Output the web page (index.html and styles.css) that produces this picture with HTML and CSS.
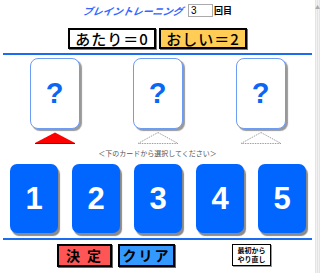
FILE: index.html
```html
<!DOCTYPE html>
<html lang="ja">
<head>
    <meta charset="UTF-8">
    <title>ブレイントレーニング</title>
    <link rel="stylesheet" href="styles.css">
</head>
<body>
    <div class="page">
        <main class="main">
            <div class="title-row">
                <span class="title">ブレイントレーニング</span>
                <input class="round" type="text" value="3">
                <span class="round-label">回目</span>
            </div>

            <div class="scores">
                <div class="score hit">あたり＝0</div>
                <div class="score near">おしい＝2</div>
            </div>

            <hr class="rule">

            <div class="slots">
                <div class="slot">
                    <div class="card-back">?</div>
                    <svg class="marker" width="42" height="12" viewBox="0 0 42 12">
                        <polygon points="21,0.5 41,11 1,11" fill="#ff0000"/>
                        <line x1="1" y1="11.5" x2="41" y2="11.5" stroke="#333" stroke-width="1"/>
                    </svg>
                </div>
                <div class="slot">
                    <div class="card-back">?</div>
                    <svg class="marker" width="42" height="12" viewBox="0 0 42 12">
                        <polygon points="21,0.5 41,11.5 1,11.5" fill="none" stroke="#888" stroke-width="0.8" stroke-dasharray="1.5,1"/>
                    </svg>
                </div>
                <div class="slot">
                    <div class="card-back">?</div>
                    <svg class="marker" width="42" height="12" viewBox="0 0 42 12">
                        <polygon points="21,0.5 41,11.5 1,11.5" fill="none" stroke="#888" stroke-width="0.8" stroke-dasharray="1.5,1"/>
                    </svg>
                </div>
            </div>

            <p class="hint">＜下のカードから選択してください＞</p>

            <div class="picks">
                <div class="pick">1</div>
                <div class="pick">2</div>
                <div class="pick">3</div>
                <div class="pick">4</div>
                <div class="pick">5</div>
            </div>

            <hr class="rule">

            <div class="actions">
                <button class="btn decide">決 定</button>
                <button class="btn clear">クリア</button>
                <button class="restart">最初から<br>やり直し</button>
            </div>
        </main>
        <div class="scrollbar"><span class="arrow">▲</span></div>
    </div>
</body>
</html>
```

FILE: styles.css
```css
body {
    margin: 0;
    padding: 0;
    background-color: #ffffff;
    font-family: "Noto Sans CJK JP", "Liberation Sans", sans-serif;
    color: #000;
}

.page {
    display: flex;
    width: 320px;
    height: 273px;
    overflow: hidden;
}

.main {
    width: 315px;
}

.scrollbar {
    width: 5px;
    background-color: #f1f1f1;
    background-image: linear-gradient(90deg, #e4e4e4 1px, transparent 1px);
    background-size: 2px 2px;
    position: relative;
}

.arrow {
    position: absolute;
    top: 3px;
    left: 0;
    font-size: 5px;
    color: #aaa;
}

.title-row {
    display: flex;
    justify-content: center;
    align-items: center;
    height: 13px;
    margin-top: 4px;
}

.title {
    color: #3366ff;
    font-size: 10px;
    font-weight: bold;
    font-style: italic;
    margin-right: 5px;
    transform: skewX(-12deg);
}

.round {
    width: 25px;
    height: 13px;
    box-sizing: border-box;
    border: 1px solid #aaa;
    padding: 0 2px;
    font-size: 10px;
    font-family: "Liberation Sans", sans-serif;
    margin: 0;
}

.round-label {
    font-size: 9px;
    font-weight: bold;
    margin-left: 1px;
}

.scores {
    display: flex;
    justify-content: center;
    gap: 3px;
    margin-top: 11px;
}

.score {
    width: 88px;
    height: 21px;
    box-sizing: border-box;
    border: 2px solid #000;
    box-shadow: 1px 1px 0 #777;
    font-size: 15px;
    line-height: 17px;
    letter-spacing: 1px;
    text-align: center;
    font-weight: 500;
    white-space: nowrap;
}

.hit {
    background-color: #ffffff;
}

.near {
    background-color: #ffcc55;
}

.rule {
    border: none;
    height: 2px;
    background-color: #1a6cf0;
    margin: 4px 3px 0 3px;
}

.slots {
    display: grid;
    grid-template-columns: repeat(3, 103px);
    margin: 3px 3px 0 3px;
}

.slot {
    display: flex;
    flex-direction: column;
    align-items: center;
}

.card-back {
    width: 50px;
    height: 71px;
    box-sizing: border-box;
    border: 1.5px solid #6d9cf7;
    border-radius: 8px;
    background-color: #fff;
    box-shadow: 2px 2px 1px #999;
    color: #0a66f5;
    font-family: "Liberation Sans", sans-serif;
    font-weight: bold;
    font-size: 29px;
    line-height: 68px;
    text-align: center;
}

.marker {
    display: block;
    margin-top: 3px;
}

.hint {
    margin: 5px 0 0 0;
    text-align: center;
    font-size: 7px;
    line-height: 9px;
    color: #555;
}

.picks {
    display: grid;
    grid-template-columns: repeat(5, 62px);
    margin: 6px 3px 0 3px;
    justify-items: center;
}

.pick {
    width: 48px;
    height: 69px;
    border-radius: 7px;
    background-color: #0066ff;
    box-shadow: 2px 3px 1px #8a8a8a;
    color: #fff;
    font-family: "Liberation Sans", sans-serif;
    font-weight: bold;
    font-size: 31px;
    line-height: 69px;
    text-align: center;
}

.picks + .rule {
    margin-top: 5px;
}

.actions {
    display: flex;
    align-items: flex-start;
    margin-top: 4px;
    padding-left: 57px;
}

.btn {
    height: 23px;
    box-sizing: border-box;
    border: 2px solid #000;
    box-shadow: 1px 1px 0 #666;
    font-family: "Noto Sans CJK JP", sans-serif;
    font-weight: bold;
    font-size: 14px;
    line-height: 17px;
    padding: 0;
    letter-spacing: 2px;
    white-space: nowrap;
    color: #000;
}

.decide {
    width: 55px;
    background-color: #ff5555;
}

.clear {
    width: 57px;
    margin-left: 6px;
    background-color: #3399ff;
}

.restart {
    width: 39px;
    height: 22px;
    margin-left: 57px;
    box-sizing: border-box;
    border: 1px solid #000;
    box-shadow: 1px 1px 0 #999;
    background-color: #fff;
    padding: 0;
    font-family: "Noto Sans CJK JP", sans-serif;
    font-weight: bold;
    font-size: 7px;
    line-height: 9px;
    color: #000;
}
```
